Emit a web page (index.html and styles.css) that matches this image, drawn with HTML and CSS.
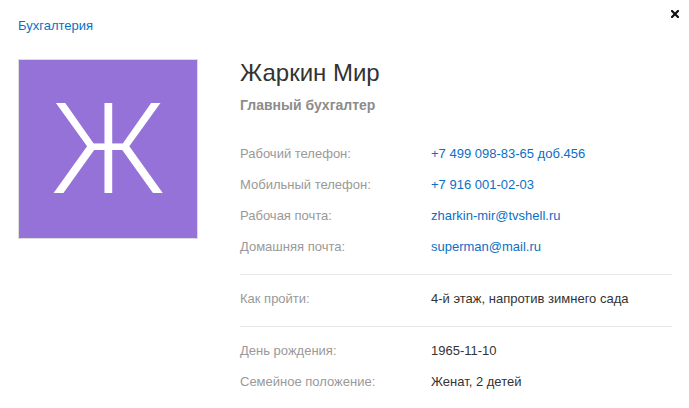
FILE: index.html
```html
<!DOCTYPE html>
<html lang="ru">
  <head>
    <meta charset="UTF-8" />
    <title>Жаркин Мир</title>
    <link rel="stylesheet" href="styles.css">
  </head>
  <body>
    <div class="card">
      <!-- Header -->
      <div class="crumbs">
        <a href="#" class="link">Бухгалтерия</a>
      </div>
      <button class="close" title="Закрыть">
        <svg width="8" height="8" viewBox="0 0 8 8">
          <path d="M1 1 L7 7 M7 1 L1 7" stroke="#111" stroke-width="2.2" stroke-linecap="square" />
        </svg>
      </button>

      <div class="profile">
        <div class="avatar">Ж</div>

        <div class="details">
          <h1 class="name">Жаркин Мир</h1>
          <div class="position">Главный бухгалтер</div>

          <div class="group first">
            <div class="row">
              <span class="label">Рабочий телефон:</span>
              <a href="#" class="value link">+7 499 098-83-65 доб.456</a>
            </div>
            <div class="row">
              <span class="label">Мобильный телефон:</span>
              <a href="#" class="value link">+7 916 001-02-03</a>
            </div>
            <div class="row">
              <span class="label">Рабочая почта:</span>
              <a href="#" class="value link">zharkin-mir@tvshell.ru</a>
            </div>
            <div class="row">
              <span class="label">Домашняя почта:</span>
              <a href="#" class="value link">superman@mail.ru</a>
            </div>
          </div>

          <div class="group">
            <div class="row">
              <span class="label">Как пройти:</span>
              <span class="value">4-й этаж, напротив зимнего сада</span>
            </div>
          </div>

          <div class="group last">
            <div class="row">
              <span class="label">День рождения:</span>
              <span class="value">1965-11-10</span>
            </div>
            <div class="row">
              <span class="label">Семейное положение:</span>
              <span class="value">Женат, 2 детей</span>
            </div>
          </div>
        </div>
      </div>
    </div>
  </body>
</html>
```

FILE: styles.css
```css
* {
  box-sizing: border-box;
}
html,
body {
  margin: 0;
  padding: 0;
  background-color: #ffffff;
  font-family: "Liberation Sans", Arial, Helvetica, sans-serif;
  font-size: 13px;
  color: #333333;
}
.card {
  position: relative;
  padding: 17px 17px 0 18px;
}
.link {
  color: #0b6fc4;
  text-decoration: none;
}
.crumbs {
  line-height: 18px;
  height: 18px;
  margin-bottom: 24px;
}
.close {
  position: absolute;
  top: 9px;
  right: 9px;
  width: 10px;
  height: 10px;
  padding: 1px;
  border: none;
  background: none;
  cursor: pointer;
  display: flex;
  align-items: center;
  justify-content: center;
}
.profile {
  display: flex;
  align-items: flex-start;
  gap: 42px;
}
.avatar {
  flex: none;
  width: 180px;
  height: 180px;
  border: 1px solid #dddddd;
  background-color: #9572d8;
  color: #ffffff;
  font-family: Roboto, sans-serif;
  font-weight: 300;
  font-size: 127px;
  line-height: 1;
  display: flex;
  align-items: center;
  justify-content: center;
  padding-top: 1px;
}
.details {
  flex: 1;
}
.name {
  margin: 0;
  font-size: 24px;
  line-height: 28px;
  font-weight: normal;
  color: #333333;
}
.position {
  margin-top: 8px;
  font-size: 14px;
  line-height: 20px;
  font-weight: bold;
  color: #8c8c8c;
}
.group {
  padding: 8px 0 12px;
  border-bottom: 1px solid #e8e8e8;
}
.group.first {
  margin-top: 23px;
  padding-top: 0;
}
.group.last {
  border-bottom: none;
}
.row {
  display: flex;
  line-height: 31px;
}
.label {
  width: 191px;
  flex: none;
  color: #999999;
}
.value {
  color: #333333;
}
.value.link {
  color: #0b6fc4;
}
```
